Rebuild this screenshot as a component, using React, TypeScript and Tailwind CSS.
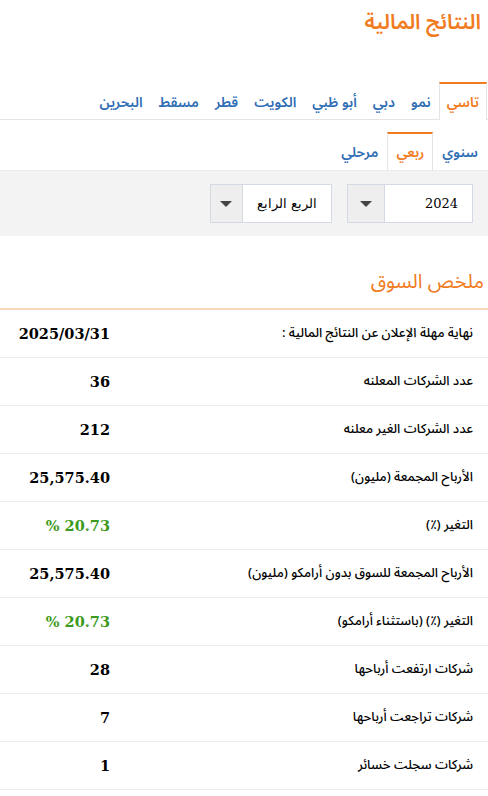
import { useState } from 'react'

const markets = ['تاسي', 'نمو', 'دبي', 'أبو ظبي', 'الكويت', 'قطر', 'مسقط', 'البحرين']
const periods = ['سنوي', 'ربعي', 'مرحلي']

const rows = [
  { label: 'نهاية مهلة الإعلان عن النتائج المالية :', value: '2025/03/31' },
  { label: 'عدد الشركات المعلنه', value: '36' },
  { label: 'عدد الشركات الغير معلنه', value: '212' },
  { label: 'الأرباح المجمعة (مليون)', value: '25,575.40' },
  { label: 'التغير (٪)', value: '20.73 %', green: true },
  { label: 'الأرباح المجمعة للسوق بدون أرامكو (مليون)', value: '25,575.40' },
  { label: 'التغير (٪) (باستثناء أرامكو)', value: '20.73 %', green: true },
  { label: 'شركات ارتفعت أرباحها', value: '28' },
  { label: 'شركات تراجعت أرباحها', value: '7' },
  { label: 'شركات سجلت خسائر', value: '1' },
]

function Select({ value, width }: { value: string; width: string }) {
  return (
    <div className={`flex h-[39px] border border-[#d3dae3] bg-white ${width}`}>
      <div className="flex flex-1 items-center whitespace-nowrap px-[14px] font-['DejaVu_Serif',serif] text-[13px] text-black">
        {value}
      </div>
      <div className="flex w-[37px] items-center justify-center border-r border-[#d3dae3] bg-[#eeeeee]">
        <span className="h-0 w-0 border-x-[6px] border-t-[6px] border-x-transparent border-t-[#444]" />
      </div>
    </div>
  )
}

export default function App() {
  const [market, setMarket] = useState(0)
  const [period, setPeriod] = useState(1)

  return (
    <div dir="rtl" className="min-h-[796px] bg-white font-['Noto_Sans_Arabic','Noto_Sans',sans-serif] text-black">
      <h1 className="px-[7px] pt-[2px] text-[21px] font-semibold leading-[40px] text-[#f07c1f]">النتائج المالية</h1>

      {/* market tabs */}
      <ul className="mt-[40px] flex border-b border-[#e4e4e4] pr-[1px]">
        {markets.map((m, i) => (
          <li
            key={m}
            onClick={() => setMarket(i)}
            className={`-mb-px flex h-[38px] cursor-pointer items-center px-[7px] text-[14px] font-semibold ${
              i === market
                ? 'border-x border-t-2 border-x-[#e4e4e4] border-t-[#f07c1f] bg-white text-[#f07c1f]'
                : 'border-x border-t-2 border-transparent text-[#2f6db5]'
            }`}
          >
            {m}
          </li>
        ))}
      </ul>

      {/* period tabs */}
      <ul className="mt-[12px] flex pr-[1px]">
        {periods.map((p, i) => (
          <li
            key={p}
            onClick={() => setPeriod(i)}
            className={`flex h-[38px] cursor-pointer items-center px-[8px] text-[14px] font-semibold ${
              i === period
                ? 'border-x border-t-2 border-x-[#e4e4e4] border-t-[#f07c1f] bg-white text-[#f07c1f]'
                : 'border-x border-t-2 border-transparent text-[#2f6db5]'
            }`}
          >
            {p}
          </li>
        ))}
      </ul>

      {/* filters */}
      <div className="flex h-[66px] items-center gap-[15px] border-t border-[#ececec] bg-[#f3f3f3] pr-[15px]">
        <Select value="2024" width="w-[126px]" />
        <Select value="الربع الرابع" width="w-[122px]" />
      </div>

      <h2 className="mt-[32px] px-[4px] text-[20px] leading-[28px] text-[#f07c1f]">ملخص السوق</h2>

      <div className="mt-[12px] border-t-2 border-[#f8d8bb]">
        {rows.map((r) => (
          <div key={r.label} className="flex h-[48px] items-center border-b border-[#ebebeb]">
            <div className="flex-1 pr-[15px] text-[13px] font-medium">{r.label}</div>
            <div
              className={`w-[125px] pr-[15px] text-right font-['DejaVu_Serif',serif] text-[14.5px] font-bold ${
                r.green ? 'text-[#3d9a1c]' : 'text-black'
              }`}
            >
              {r.value}
            </div>
          </div>
        ))}
      </div>
    </div>
  )
}
